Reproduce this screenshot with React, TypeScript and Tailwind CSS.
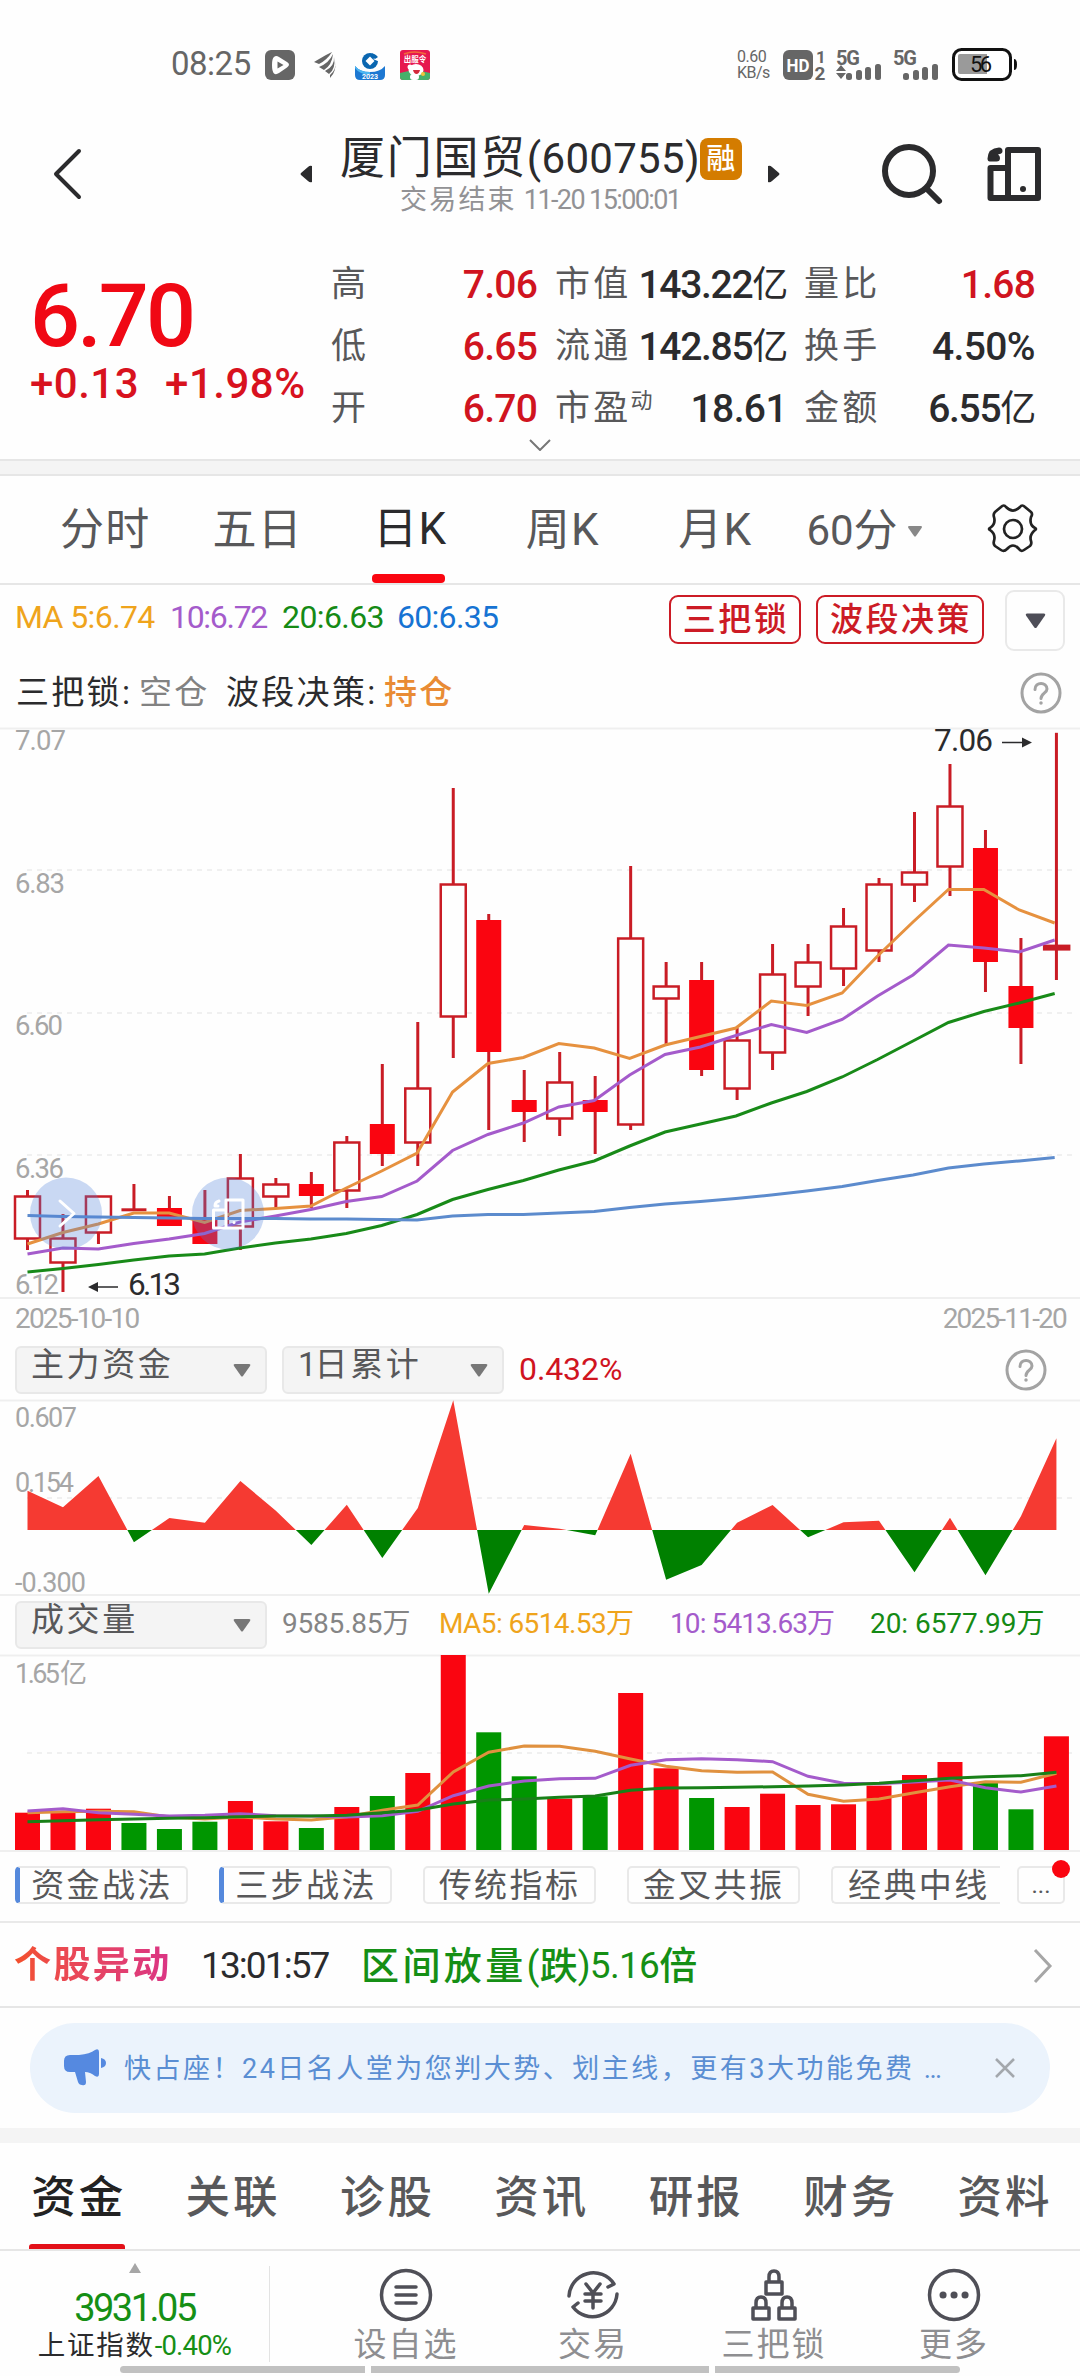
import type { ReactNode } from "react";

interface Candle {
  high: number;
  top: number;
  bottom: number;
  low: number;
  solid?: boolean;
}

const STEP = 35.48;
const X0 = 27.5;
const cx = (i: number) => X0 + i * STEP;

const candles: Candle[] = [
  { high: 6.3, top: 6.29, bottom: 6.22, low: 6.2 },
  { high: 6.26, top: 6.22, bottom: 6.18, low: 6.13 },
  { high: 6.29, top: 6.29, bottom: 6.23, low: 6.21 },
  { high: 6.31, top: 6.267, bottom: 6.267, low: 6.267 },
  { high: 6.29, top: 6.27, bottom: 6.24, low: 6.24, solid: true },
  { high: 6.3, top: 6.25, bottom: 6.21, low: 6.21, solid: true },
  { high: 6.36, top: 6.32, bottom: 6.24, low: 6.2 },
  { high: 6.32, top: 6.31, bottom: 6.29, low: 6.27 },
  { high: 6.33, top: 6.31, bottom: 6.29, low: 6.27, solid: true },
  { high: 6.39, top: 6.38, bottom: 6.3, low: 6.27 },
  { high: 6.51, top: 6.41, bottom: 6.36, low: 6.34, solid: true },
  { high: 6.58, top: 6.47, bottom: 6.38, low: 6.34 },
  { high: 6.97, top: 6.81, bottom: 6.59, low: 6.52 },
  { high: 6.76, top: 6.75, bottom: 6.53, low: 6.4, solid: true },
  { high: 6.5, top: 6.45, bottom: 6.43, low: 6.38, solid: true },
  { high: 6.53, top: 6.48, bottom: 6.42, low: 6.39 },
  { high: 6.49, top: 6.45, bottom: 6.43, low: 6.36, solid: true },
  { high: 6.84, top: 6.72, bottom: 6.41, low: 6.4 },
  { high: 6.68, top: 6.64, bottom: 6.62, low: 6.54 },
  { high: 6.68, top: 6.65, bottom: 6.5, low: 6.49, solid: true },
  { high: 6.57, top: 6.55, bottom: 6.47, low: 6.45 },
  { high: 6.71, top: 6.66, bottom: 6.53, low: 6.5 },
  { high: 6.71, top: 6.68, bottom: 6.64, low: 6.59 },
  { high: 6.77, top: 6.74, bottom: 6.67, low: 6.64 },
  { high: 6.82, top: 6.81, bottom: 6.7, low: 6.68 },
  { high: 6.93, top: 6.83, bottom: 6.81, low: 6.78 },
  { high: 7.01, top: 6.94, bottom: 6.84, low: 6.79 },
  { high: 6.9, top: 6.87, bottom: 6.68, low: 6.63, solid: true },
  { high: 6.72, top: 6.64, bottom: 6.57, low: 6.51, solid: true },
  { high: 7.062, top: 6.704, bottom: 6.704, low: 6.65 },
];

const priceMa = [
  { color: "#e6913f", ys: [516, 504.5, 496, 485, 485, 494.5, 482.5, 480.5, 478, 460, 443, 425, 364, 335.5, 329.5, 315.5, 320, 330.5, 317, 308.5, 300, 273, 277.5, 265, 228, 194, 161.5, 161.5, 182, 195] },
  { color: "#a45bcb", ys: [526, 520, 521, 515.5, 511, 505.5, 494, 488, 481.5, 473.5, 468.5, 453, 422.5, 406.5, 395, 379, 372.5, 347, 326.5, 319, 307.5, 296.5, 304.5, 291.5, 268, 247, 217, 220, 224, 212] },
  { color: "#188a18", ys: [544, 540.5, 536.5, 532, 528, 526, 520, 515, 511, 505.5, 497.5, 486.5, 471.5, 461.5, 452.5, 442, 433, 418, 404, 396, 388, 375, 363.5, 349, 331.5, 313, 294.5, 283.5, 275, 265.5] },
  { color: "#5c8bcd", ys: [487.5, 488.5, 489, 489.5, 490, 490.5, 490.5, 490.5, 491, 491, 491.5, 492, 488, 486.5, 486.5, 485, 483.5, 479.5, 476, 473.5, 470.5, 467, 463, 458.5, 452.5, 447, 440, 436, 433, 429.5] },
];

const fund = [39.3, 22.7, 54, -12.3, 12, 7.3, 49, 19.3, -15, 25.3, -28, 22, 129.7, -63.7, 5, 1.3, -5.3, 76.3, -49.7, -35, 7.3, 25, -7.3, 7.7, 9.3, -42.3, 12.3, -45.3, 13.7, 91.7];

const volumes = [37.3, 37.7, 41.3, 27, 21, 28.3, 49, 28.7, 22, 43, 54, 77, 195, 117.7, 73.7, 51.3, 53.7, 157, 81.7, 52, 43, 56.3, 45, 45.7, 64.3, 75, 88, 67, 40.7, 113.7];
const volumeSide = "rrrgggrrgrgrrggrgrrgrrrrrrrggr";

const volumeMa = [
  { color: "#e0913f", ys: [157.7, 156.7, 156.3, 156.7, 162, 164, 162, 164, 165, 161.7, 155.3, 150, 117, 97.3, 91, 91.3, 96.3, 104, 111.3, 115.7, 117.3, 117, 139.3, 146.3, 144, 137.7, 131.7, 126.7, 127.3, 118.3] },
  { color: "#a45bcb", ys: [156, 153.7, 157.7, 159.3, 161, 160.3, 158.7, 160.7, 161, 162, 160.7, 156.3, 140.7, 131, 126, 123.7, 123.3, 110.3, 104.7, 103.7, 104.7, 106.7, 121.3, 128.3, 128.7, 127, 125, 132.7, 137, 131] },
  { color: "#188018", ys: [166.7, 165.7, 164.7, 164, 163.3, 162.7, 161.7, 161, 161, 160.3, 157.7, 155, 149, 145, 144, 142.3, 141, 135.3, 133, 132.7, 132.3, 131.7, 131, 130, 128.3, 125.7, 123.3, 121.7, 120.7, 117.3] },
];

const line = (ys: number[], step = STEP) => ys.map((y, i) => `${X0 + i * step},${y}`).join(" ");

function Caret({ className = "" }: { className?: string }) {
  return (
    <svg width="18" height="13" viewBox="0 0 18 13" className={className} fill="currentColor">
      <path d="M2 0h14q2 0 1 2l-7 10q-1 1-2 0L1 2Q0 0 2 0Z" />
    </svg>
  );
}

function HelpIcon() {
  return (
    <svg width="42" height="42" viewBox="0 0 42 42" fill="none" stroke="#a3a3a3" strokeWidth="3" strokeLinecap="round">
      <circle cx="21" cy="21" r="19" />
      <path d="M15 17.500c0-8 12-8 12-.5 0 4-6 4.500-6 9.500" />
      <circle cx="21" cy="31" r="1" fill="#a3a3a3" strokeWidth="1.500" />
    </svg>
  );
}

function StatusBar() {
  return (
    <div className="flex h-[106px] items-center pt-[24px] pl-[171px] text-[#666]">
      <span className="-mt-[3px] w-[94px] text-[33px] leading-none tracking-[-0.500px] whitespace-nowrap">08:25</span>
      <svg width="30" height="30" viewBox="0 0 30 30">
        <rect width="30" height="30" rx="6" fill="#666" />
        <path d="M9 7q2-2 5 0l8 5q4 2.500 0 5.500l-8 5.500q-3 2-5 .5-2-2-2-8.500T9 7Z" fill="#fff" />
        <path d="M12.500 11.500v7l6-3.500z" fill="#666" />
      </svg>
      <svg width="24" height="28" viewBox="0 0 24 28" fill="#666" className="ml-[18px]">
        <path d="M19 1 13 4Q6 8 1 11l5 2Q14 9 19 1Z" />
        <path d="M20 3q-4 9-14 13l5 3Q19 14 20 3Z" />
        <path d="M21 6q1 9-9 14l4 3Q23 18 21 6Z" />
        <path d="M22 10q2 8-5 14v3q7-7 5-17Z" />
      </svg>
      <svg width="30" height="30" viewBox="0 0 30 30" className="ml-[18px] overflow-visible">
        <circle cx="15" cy="11" r="8" fill="#0a66b0" />
        <path d="M15 6.500 19.500 11 15 15.500 10.500 11z" fill="#fff" />
        <path d="m18 9 7-3v6z" fill="#fff" />
        <path d="M17 3.500q4 .5 6 3.500l-3 2-4-4z" fill="#0a66b0" />
        <path d="M0 16q5 6 15 6t15-6v9q0 5-5 5H5q-5 0-5-5Z" fill="#1d78d2" />
        <path d="M0 16q5 6 15 6v3Q4 24 0 18Z" fill="#4db6f2" />
        <text x="15" y="29" fontSize="7" fontWeight="700" textAnchor="middle" fill="#fff" className="font-[Roboto]">2023</text>
      </svg>
      <svg width="30" height="30" viewBox="0 0 30 30" className="ml-[15px] overflow-visible">
        <rect width="30" height="30" rx="3" fill="#e6174f" />
        <path d="M0 23q15-5 30 0v4q0 3-3 3H3q-3 0-3-3Z" fill="#47b06a" />
        <path d="M4 4q10-4 22 0" stroke="#f26a3a" strokeWidth="1.500" fill="none" />
        <text x="15" y="12" fontSize="7.500" fontWeight="700" textAnchor="middle" fill="#fff" className="font-['Noto_Sans_CJK_SC']">出服令</text>
        <ellipse cx="16" cy="20" rx="7.500" ry="6" fill="#fff" />
        <circle cx="10" cy="17" r="2.500" fill="#fff" />
        <rect x="10" y="24" width="9" height="6" rx="3" fill="#fff" />
        <path d="M13 20h7q-1 4-3.500 4T13 20Z" fill="#d42a3b" />
        <circle cx="23" cy="24" r="2" fill="#f3c33c" />
      </svg>
      <div className="ml-[307px] flex w-[46px] flex-col text-[16px] leading-[16px] tracking-[-0.500px] whitespace-nowrap">
        <span>0.60</span>
        <span>KB/s</span>
      </div>
      <svg width="44" height="32" viewBox="0 0 44 32" fill="#666" className="overflow-visible font-[Roboto] font-bold">
        <rect y="1" width="30" height="30" rx="6" />
        <text x="3.500" y="22.500" fontSize="18" textLength="23" lengthAdjust="spacingAndGlyphs" fill="#fff">HD</text>
        <text x="33" y="13.500" fontSize="17">1</text>
        <text x="31.500" y="31" fontSize="19">2</text>
      </svg>
      <svg width="106" height="32" viewBox="0 0 106 32" fill="#666" className="ml-[9px] overflow-visible font-[Roboto] font-bold">
        <text x="0" y="15.500" fontSize="20" textLength="24">5G</text>
        <path d="m5 16 5 6H0zM0 24h10l-5 6z" />
        <rect x="10" y="24" width="6" height="7" rx="2.500" />
        <rect x="20" y="21" width="6" height="10" rx="2.500" />
        <rect x="29" y="18" width="6" height="13" rx="2.500" />
        <rect x="39" y="15" width="6" height="16" rx="2.500" />
        <text x="57" y="15.500" fontSize="20" textLength="24">5G</text>
        <rect x="67" y="24" width="6" height="7" rx="2.500" />
        <rect x="77" y="21" width="6" height="10" rx="2.500" />
        <rect x="86" y="18" width="6" height="13" rx="2.500" />
        <rect x="96" y="15" width="6" height="16" rx="2.500" />
      </svg>
      <svg width="66" height="34" viewBox="0 0 66 34" className="ml-[10px] overflow-visible font-[Roboto]">
        <rect x="1.500" y="1.500" width="57" height="30" rx="8" fill="#fff" stroke="#111" strokeWidth="3" />
        <path d="M8 6h27v20H8q-2 0-2-2V8q0-2 2-2Z" fill="#9a9a9a" />
        <path d="M62 11q3 0 3 5.500T62 22Z" fill="#111" />
        <text x="18" y="23.500" fontSize="22" textLength="22" fill="#111">56</text>
      </svg>
    </div>
  );
}

function Header() {
  return (
    <header className="flex h-[134px] items-start text-[#2b2b2d]">
      <svg width="34" height="56" viewBox="0 0 34 56" className="mt-[40px] ml-[50px]" fill="none" stroke="currentColor" strokeWidth="4" strokeLinecap="round" strokeLinejoin="round">
        <path d="M29 5 6 28l23 23" />
      </svg>
      <svg width="14" height="18" viewBox="0 0 14 18" className="mt-[59px] ml-[215px]" fill="currentColor">
        <path d="M13 1v16q-2 1-4-1l-7-6q-1-1 0-2l7-6q2-2 4-1Z" />
      </svg>
      <div className="ml-[27px] flex w-[404px] flex-col items-start">
        <div className="flex items-center whitespace-nowrap">
          <span className="mt-[29px] text-[45px] leading-[48px] tracking-[1.700px]">厦门国贸</span>
          <span className="mt-[29px] text-[42px] leading-[48px] tracking-[0.300px]">(600755)</span>
          <span className="mt-[29px] flex h-[42px] w-[42px] items-center justify-center rounded-lg bg-[#d47c00] text-[29px] leading-none font-medium text-white">融</span>
        </div>
        <div className="mt-[2px] ml-[60px] flex items-center leading-[30px] whitespace-nowrap text-[#929295]">
          <span className="text-[27px] tracking-[2.200px]">交易结束</span>
          <span className="ml-[7px] text-[27px] tracking-[-1.600px]">11-20 15:00:01</span>
        </div>
      </div>
      <svg width="14" height="18" viewBox="0 0 14 18" className="mt-[59px] ml-[23px]" fill="currentColor">
        <path d="M1 1v16q2 1 4-1l7-6q1-1 0-2L5 2Q3 0 1 1Z" />
      </svg>
      <svg width="62" height="64" viewBox="0 0 62 64" className="mt-[36px] ml-[101px]" fill="none" stroke="currentColor" strokeWidth="6" strokeLinecap="round">
        <circle cx="27" cy="29" r="24" />
        <path d="m45 47 12 12" />
      </svg>
      <svg width="56" height="56" viewBox="0 0 56 56" className="mt-[40px] ml-[43px]" fill="none" stroke="currentColor" strokeWidth="6" strokeLinejoin="round">
        <path d="M21 4h30v48H21Z" />
        <path d="M21 22H3.500v30H21" />
        <circle cx="36" cy="43" r="3" fill="currentColor" stroke="none" />
        <path d="M12 1.500q3.500 0 3.500 3.500 0 2.500-3 3l-1.500.5q2 1 2 3.500 0 3.500-3.500 3.500H3.500Q.5 16 .5 12.500 1 2 12 1.500Z" fill="currentColor" stroke="none" />
      </svg>
    </header>
  );
}

function QuoteCell({ label, value, up, sup, className }: { label: string; value: string; up?: boolean; sup?: string; className: string }) {
  const yi = value.endsWith("亿");
  return (
    <div className={`flex items-center justify-between whitespace-nowrap ${className}`}>
      <span className="flex items-center text-[35px] tracking-[3.300px] text-[#58585a]">
        {label}
        {sup && <span className="-mt-[16px] -ml-[1px] text-[22px] leading-none">{sup}</span>}
      </span>
      <span className={`flex items-center text-[39px] font-medium ${up ? "tracking-[-0.800px] text-[#d0141f]" : yi ? "tracking-[-1.300px] text-[#2b2b2d]" : "tracking-[-0.600px] text-[#2b2b2d]"}`}>
        {yi ? value.slice(0, -1) : value}
        {yi && <span className="text-[36px] font-normal">亿</span>}
      </span>
    </div>
  );
}

function Quote() {
  return (
    <section className="flex h-[219px] pl-[30px]">
      <div className="flex w-[301px] flex-col text-[#f00814]">
        <span className="mt-[32px] text-[88px] leading-[88px] font-medium tracking-[-2.800px]">6.70</span>
        <div className="mt-[2px] flex gap-[26px] text-[42px] leading-[44px] font-medium tracking-[0.500px] whitespace-nowrap text-[#d8121e]">
          <span>+0.13</span>
          <span>+1.98%</span>
        </div>
      </div>
      <div className="flex w-[706px] flex-col items-center">
        <div className="flex w-full flex-col pt-[14px]">
          <div className="flex h-[62px] items-center">
            <QuoteCell label="高" value="7.06" up className="w-[206px]" />
            <QuoteCell label="市值" value="143.22亿" className="ml-[18px] w-[232px]" />
            <QuoteCell label="量比" value="1.68" up className="ml-[17px] w-[231px]" />
          </div>
          <div className="flex h-[62px] items-center">
            <QuoteCell label="低" value="6.65" up className="w-[206px]" />
            <QuoteCell label="流通" value="142.85亿" className="ml-[18px] w-[232px]" />
            <QuoteCell label="换手" value="4.50%" className="ml-[17px] w-[231px]" />
          </div>
          <div className="flex h-[62px] items-center">
            <QuoteCell label="开" value="6.70" up className="w-[206px]" />
            <QuoteCell label="市盈" sup="动" value="18.61" className="ml-[18px] w-[232px]" />
            <QuoteCell label="金额" value="6.55亿" className="ml-[17px] w-[231px]" />
          </div>
        </div>
        <svg width="22" height="12" viewBox="0 0 22 12" className="-mt-[1px] mr-[288px]" fill="none" stroke="#777" strokeWidth="2">
          <path d="m1 1 10 10L21 1" />
        </svg>
      </div>
    </section>
  );
}

function PeriodTabs() {
  const tabs = ["分时", "五日", "日K", "周K", "月K"];
  return (
    <nav className="flex h-[109px] border-b-2 border-[#e6e6e6] pl-[28px] text-[44px] leading-none text-[#58585a]">
      {tabs.map((t) => (
        <div key={t} className={`flex w-[152.500px] flex-col items-center whitespace-nowrap ${t === "日K" ? "text-[#2b2b2d]" : ""}`}>
          <span className="flex h-[99px] items-center pt-[8px] pl-[2px] tracking-[1.300px]">{t}</span>
          {t === "日K" && <span className="-ml-[1px] h-[9px] w-[73px] rounded-[4px] bg-[#fa0510]" />}
        </div>
      ))}
      <div className="flex w-[152px] items-center justify-center pt-[3px] pr-[4px]">
        <span className="text-[42px]">60</span>
        <span>分</span>
        <Caret className="ml-[9px] h-[11px] w-[16px] text-[#888]" />
      </div>
      <svg width="54" height="54" viewBox="0 0 54 54" className="mt-[26px] ml-[43px]" fill="none" stroke="#222" strokeWidth="2.700" strokeLinejoin="round">
        <path d="M15 5q3-3 5 0 7 7 14 0 2-3 5 0l6 5q2 2 0 5-2 8 4 11 2 1 0 2-6 5-4 11 1 3-1 5l-6 4q-3 2-5-1-6-7-12 0-3 3-6 1l-6-4q-2-2-1-5 2-7-4-11-2-1 0-2 6-4 4-11-1-3 1-5Z" />
        <circle cx="27" cy="27" r="9" />
      </svg>
    </nav>
  );
}

function Indicators() {
  return (
    <section className="flex h-[143px] flex-col">
      <div className="flex h-[73px] items-start pl-[15px] text-[32px] whitespace-nowrap">
        <div className="flex w-[654px] pt-[9px] leading-[46px]">
          <span className="w-[155px] tracking-[-0.600px] text-[#efa41c]">MA 5:6.74</span>
          <span className="w-[112px] tracking-[-1.300px] text-[#a45bcb]">10:6.72</span>
          <span className="w-[115px] tracking-[-0.600px] text-[#158a15]">20:6.63</span>
          <span className="tracking-[-0.700px] text-[#1673d3]">60:6.35</span>
        </div>
        <span className="mt-[10px] flex h-[49px] w-[132px] items-center justify-center rounded-[9px] border-2 border-[#cc1b25] pl-[2px] text-[33px] font-medium tracking-[2.500px] text-[#cc1b25]">三把锁</span>
        <span className="mt-[10px] ml-[15px] flex h-[49px] w-[168px] items-center justify-center rounded-[9px] border-2 border-[#cc1b25] pl-[2px] text-[33px] font-medium tracking-[2.500px] text-[#cc1b25]">波段决策</span>
        <span className="mt-[5px] ml-[21px] flex h-[61px] w-[60px] items-center justify-center rounded-[9px] border-2 border-[#e9e9e9]">
          <Caret className="h-[16px] w-[21px] text-[#4d4d57]" />
        </span>
      </div>
      <div className="flex h-[70px] items-center pl-[16px] text-[33px] tracking-[2.300px] whitespace-nowrap text-[#2b2b2d]">
        <span className="w-[123px]">三把锁:</span>
        <span className="w-[87px] text-[#828282]">空仓</span>
        <span className="w-[158px]">波段决策:</span>
        <span className="w-[636px] font-medium text-[#e98b34]">持仓</span>
        <HelpIcon />
      </div>
    </section>
  );
}

function PriceChart() {
  const py = (p: number) => (7.07 - p) * 600;
  return (
    <svg width="1080" height="572" viewBox="0 0 1080 572" className="block overflow-visible font-[Roboto]">
      <path d="M0 .5H1080M0 570H1080" stroke="#efefef" strokeWidth="2" />
      <path d="M27 142H1077M27 285H1077M27 427H1077" stroke="#f0f0f0" strokeWidth="2" strokeDasharray="5 5" />
      <g stroke="#c91c25" strokeWidth="3">
        {candles.map((c, i) => {
          const x = cx(i);
          const h = py(c.bottom) - py(c.top);
          if (h === 0) {
            const t = i === candles.length - 1 ? 6 : 3;
            return (
              <g key={i}>
                <path d={`M${x} ${py(c.high)}V${py(c.low)}`} />
                <path d={`M${x - (t === 6 ? 13.5 : 12.5)} ${py(c.top)}h${t === 6 ? 27.5 : 25}`} strokeWidth={t} />
              </g>
            );
          }
          return (
            <g key={i}>
              <path d={`M${x} ${py(c.high)}V${py(c.top)}M${x} ${py(c.bottom)}V${py(c.low)}`} />
              {c.solid ? (
                <rect x={x - 12.5} y={py(c.top)} width="25" height={h} fill="#fa0510" stroke="none" />
              ) : (
                <rect x={x - 12.5} y={py(c.top) + 0.5} width="25" height={h} fill="#fefefe" strokeWidth="2.500" />
              )}
            </g>
          );
        })}
      </g>
      {priceMa.map((m) => (
        <polyline key={m.color} points={line(m.ys, 35.42)} fill="none" stroke={m.color} strokeWidth="3" />
      ))}
      <g fill="#a6a6a6" fontSize="27.500">
        <text x="15" y="22" textLength="51">7.07</text>
        <text x="15" y="165" textLength="50">6.83</text>
        <text x="15" y="307" textLength="48">6.60</text>
        <text x="15" y="450" textLength="49">6.36</text>
        <text x="15" y="566" textLength="44">6.12</text>
      </g>
      <g fill="#2b2b2d" fontSize="31.500">
        <text x="128" y="567" textLength="53">6.13</text>
        <text x="934" y="22.500" textLength="59">7.06</text>
      </g>
      <path d="M118 559H97M1002 14.500h21" stroke="#2b2b2d" strokeWidth="1.500" />
      <path d="m88 559 10-5v10zM1032 14.500l-10-5v10z" fill="#2b2b2d" />
      <g fill="#5080dc" fillOpacity="0.300">
        <circle cx="66" cy="485.500" r="36" />
        <circle cx="228" cy="485.500" r="36" />
      </g>
      <g fill="none" stroke="#fff" strokeWidth="3" strokeLinecap="round" strokeLinejoin="round">
        <path d="m60 473 14 12.500L60 498" />
        <path d="M226 472h17v28h-17zM226 482h-12.500v18H226" />
        <path d="M219 473q-4 1-4 5h3" />
        <path d="M234 494.500v.1" />
      </g>
    </svg>
  );
}

function Select({ label, className }: { label: ReactNode; className: string }) {
  return (
    <div className={`flex h-[48px] justify-between rounded-[6px] border-2 border-[#e8e8e8] bg-[#f4f4f4] px-[14px] text-[33px] leading-[34px] tracking-[2.600px] whitespace-nowrap text-[#58585a] ${className}`}>
      <span>{label}</span>
      <Caret className="mt-[16px] text-[#777]" />
    </div>
  );
}

function FundChart() {
  const pts = `${X0},130 ${fund.map((v, i) => `${cx(i)},${130 - v}`).join(" ")} ${cx(29)},130`;
  return (
    <svg width="1080" height="196" viewBox="0 0 1080 196" className="block overflow-visible font-[Roboto]">
      <defs>
        <clipPath id="inflow">
          <rect width="1080" height="130" />
        </clipPath>
        <clipPath id="outflow">
          <rect y="130" width="1080" height="66" />
        </clipPath>
      </defs>
      <path d="M0 .5H1080M0 195H1080" stroke="#efefef" strokeWidth="2" />
      <path d="M27 98H1077" stroke="#f0f0f0" strokeWidth="2" strokeDasharray="5 5" />
      <g fill="#a6a6a6" fontSize="27">
        <text x="15" y="27" textLength="62">0.607</text>
        <text x="15" y="92" textLength="59">0.154</text>
        <text x="15" y="192" textLength="71">-0.300</text>
      </g>
      <polygon points={pts} fill="#f53a32" clipPath="url(#inflow)" />
      <polygon points={pts} fill="#008000" clipPath="url(#outflow)" />
    </svg>
  );
}

function VolumeChart() {
  return (
    <svg width="1080" height="197" viewBox="0 0 1080 197" className="block overflow-visible font-[Roboto]">
      <path d="M0 .5H1080M0 196H1080" stroke="#efefef" strokeWidth="2" />
      <path d="M27 98H1077" stroke="#f0f0f0" strokeWidth="2" strokeDasharray="5 5" />
      <text x="15" y="28" fontSize="27" fill="#a6a6a6" textLength="45">1.65</text>
      <text x="60" y="28" fontSize="27" fill="#a6a6a6" className="font-['Noto_Sans_CJK_SC']">亿</text>
      {volumes.map((v, i) => (
        <rect key={i} x={cx(i) - 12.5} y={195 - v} width="25" height={v} fill={volumeSide[i] === "r" ? "#fa0510" : "#009600"} />
      ))}
      {volumeMa.map((m) => (
        <polyline key={m.color} points={line(m.ys)} fill="none" stroke={m.color} strokeWidth="3" />
      ))}
    </svg>
  );
}

function StrategyChips() {
  return (
    <div className="flex h-[71px] items-start border-b-2 border-[#e9e9e9] pt-[14px] pl-[15px] text-[33px] leading-none tracking-[2.400px] whitespace-nowrap text-[#58585a]">
      {["资金战法", "三步战法"].map((t) => (
        <span key={t} className="mr-[31px] flex h-[38px] w-[173px] items-center justify-center rounded-[5px] border-2 border-l-[5px] border-[#e9e9e9] border-l-[#5589dc] pr-[2px]">{t}</span>
      ))}
      {["传统指标", "金叉共振"].map((t) => (
        <span key={t} className="mr-[31px] flex h-[38px] w-[173px] items-center justify-center rounded-[5px] border-2 border-[#e9e9e9]">{t}</span>
      ))}
      <span className="flex h-[38px] w-[169px] items-center rounded-l-[5px] border-2 border-r-0 border-[#e9e9e9] pl-[15px]">经典中线</span>
      <span className="relative ml-[17px] flex h-[38px] w-[48px] items-center justify-center rounded-[5px] border-2 border-[#e9e9e9] text-[24px] tracking-normal">
        ...
        <span className="absolute -top-[8px] -right-[7px] h-[18px] w-[18px] rounded-full bg-[#fa0510]" />
      </span>
    </div>
  );
}

function Signal() {
  return (
    <div className="flex h-[85px] items-center border-b-2 border-[#e6e6e6] pt-[3px] pl-[14px] whitespace-nowrap">
      <span className="w-[187px] bg-gradient-to-r from-[#f3502a] to-[#d93089] to-90% bg-clip-text text-[37px] font-bold tracking-[2.400px] text-transparent">个股异动</span>
      <span className="w-[160px] text-[37px] tracking-[-1.900px] text-[#2b2b2d]">13:01:57</span>
      <span className="flex w-[670px] items-center text-[38px] font-medium text-[#158f15]">
        <span className="tracking-[3.400px]">区间放量</span>
        <span className="font-normal">(</span>
        <span>跌</span>
        <span className="text-[37px] font-normal tracking-[-0.700px]">)5.16</span>
        <span>倍</span>
      </span>
      <svg width="24" height="36" viewBox="0 0 24 36" fill="none" stroke="#a6a6a6" strokeWidth="3">
        <path d="m4 2 15 16L4 34" />
      </svg>
    </div>
  );
}

function Banner() {
  return (
    <div className="flex h-[120px] items-center px-[30px]">
      <div className="flex h-[90px] w-full items-center rounded-[45px] bg-[#ebf3fc] pl-[33px] text-[#5a8ed3]">
        <svg width="44" height="38" viewBox="0 0 44 38" fill="#5589e0">
          <path d="M7 6h9Q27 5 32 1q4-2 4 2v22q0 4-4 2-5-4-10-4l1 10q0 4-4 3-3 0-4-3l-3-10H7q-6 0-6-6v-5q0-6 6-6Z" />
          <path d="M38 9q5 1 5 5t-5 5Z" />
        </svg>
        <span className="mt-[2px] ml-[17px] w-[818px] text-[27px] tracking-[2.500px] whitespace-nowrap">
          快占座！24日名人堂为您判大势、划主线，更有3大功能免费 …
        </span>
        <svg width="20" height="20" viewBox="0 0 20 20" className="ml-[53px]" fill="none" stroke="#a3a8ad" strokeWidth="2.500">
          <path d="m1 1 18 18M19 1 1 19" />
        </svg>
      </div>
    </div>
  );
}

function InfoTabs() {
  const tabs = ["资金", "关联", "诊股", "资讯", "研报", "财务", "资料"];
  return (
    <nav className="flex h-[108px] border-b-2 border-[#e6e6e6] text-[44.500px] leading-none font-medium text-[#58585a]">
      {tabs.map((t, i) => (
        <div key={t} className={`flex w-[154.400px] shrink-0 flex-col items-center whitespace-nowrap ${i === 0 ? "text-[#222]" : ""}`}>
          <span className="flex h-[101px] items-center pt-[10px] pl-[3px] tracking-[3px]">{t}</span>
          {i === 0 && <span className="h-[5px] w-[96px] rounded-t-[3px] bg-[#e31019]" />}
        </div>
      ))}
    </nav>
  );
}

function NavItem({ label, children, className }: { label: string; children: ReactNode; className: string }) {
  return (
    <div className={`flex flex-col items-center pt-[16px] whitespace-nowrap ${className}`}>
      <svg width="56" height="56" viewBox="0 0 56 56" fill="none" stroke="#4f4f57" strokeWidth="3.500" strokeLinecap="round" strokeLinejoin="round">
        {children}
      </svg>
      <span className="mt-[4px] text-[33px] leading-[36px] tracking-[2px] text-[#8e8e91]">{label}</span>
    </div>
  );
}

function BottomBar() {
  return (
    <footer className="flex h-[125px] flex-col">
      <div className="flex h-[115px]">
        <div className="flex w-[269px] flex-col items-center pt-[12px] whitespace-nowrap">
          <svg width="14" height="10" viewBox="0 0 14 10" fill="#a6a6a6">
            <path d="m7 0 6 10H1Z" />
          </svg>
          <span className="mt-[14px] text-[38px] leading-[42px] tracking-[-2.500px] text-[#158f15]">3931.05</span>
          <span className="flex items-center text-[27.500px] leading-[34px] text-[#2b2b2d]">
            <span className="tracking-[1.700px]">上证指数</span>
            <span className="tracking-[-0.800px] text-[#158f15]">-0.40%</span>
          </span>
        </div>
        <div className="mt-[15px] h-[96px] w-px bg-[#e3e3e3]" />
        <NavItem label="设自选" className="ml-[44px] w-[184px]">
          <circle cx="28" cy="28" r="24.500" />
          <path d="M18 20h20M18 28h20M18 36h20" />
        </NavItem>
        <NavItem label="交易" className="w-[190px]">
          <path d="M4 29A24.500 24.500 0 0 1 49 17l-6 3M52 27A24.500 24.500 0 0 1 8 40l5-4" />
          <path d="m21 17 7 9 7-9M28 26v15M20 27h16M20 34h16" />
        </NavItem>
        <NavItem label="三把锁" className="w-[172px]">
          <path d="M20 15h16v12H20zM7 41h16v11H7zM33 41h16v11H33zM23 15v-5q0-6 5-6t5 6v5M10 41v-5q0-6 5-6t5 6v5M36 41v-5q0-6 5-6t5 6v5" />
        </NavItem>
        <NavItem label="更多" className="w-[188px]">
          <circle cx="28" cy="28" r="24.500" />
          <path d="M17 28h.1M28 28h.1M39 28h.1" strokeWidth="7" />
        </NavItem>
      </div>
      <div className="flex gap-[6px] pl-[120px]">
        <span className="h-[7px] w-[245px] rounded-l-full bg-[#c1c1c1]" />
        <span className="h-[7px] w-[338px] bg-[#c1c1c1]" />
        <span className="h-[7px] w-[245px] rounded-r-full bg-[#c1c1c1]" />
      </div>
    </footer>
  );
}

export default function App() {
  return (
    <main className="flex h-[2376px] w-[1080px] flex-col overflow-hidden bg-[#fefefe] font-[Roboto,'Noto_Sans_CJK_SC',sans-serif]">
      <StatusBar />
      <Header />
      <Quote />
      <div className="h-[17px] shrink-0 border-y-2 border-[#e6e6e6] bg-[#f4f4f4]" />
      <PeriodTabs />
      <Indicators />
      <PriceChart />
      <div className="flex h-[46px] justify-between px-[15px] text-[28px] leading-[38px] tracking-[-1.800px] text-[#a6a6a6]">
        <span>2025-10-10</span>
        <span className="-mr-[1px]">2025-11-20</span>
      </div>
      <div className="flex h-[54px] items-start pl-[15px]">
        <Select label="主力资金" className="w-[252px]" />
        <Select label={<><span className="tracking-[-2px]">1</span>日累计</>} className="ml-[15px] w-[222px]" />
        <span className="ml-[15px] w-[486px] text-[32px] leading-[47px] tracking-[-0.100px] text-[#d0141f]">0.432%</span>
        <span className="mt-[3px]">
          <HelpIcon />
        </span>
      </div>
      <FundChart />
      <div className="flex h-[59px] items-start pt-[5px] pl-[15px] whitespace-nowrap">
        <Select label="成交量" className="w-[252px]" />
        <div className="flex text-[28px] leading-[45px]">
          <span className="ml-[15px] w-[157px] tracking-[-0.200px] text-[#858585]">9585.85万</span>
          <span className="w-[231px] tracking-[-0.600px] text-[#efa41c]">MA5: 6514.53万</span>
          <span className="w-[200px] tracking-[-0.900px] text-[#a45bcb]">10: 5413.63万</span>
          <span className="tracking-[-0.050px] text-[#158a15]">20: 6577.99万</span>
        </div>
      </div>
      <VolumeChart />
      <StrategyChips />
      <Signal />
      <Banner />
      <div className="h-[15px] shrink-0 bg-[#f4f4f4]" />
      <InfoTabs />
      <BottomBar />
    </main>
  );
}
